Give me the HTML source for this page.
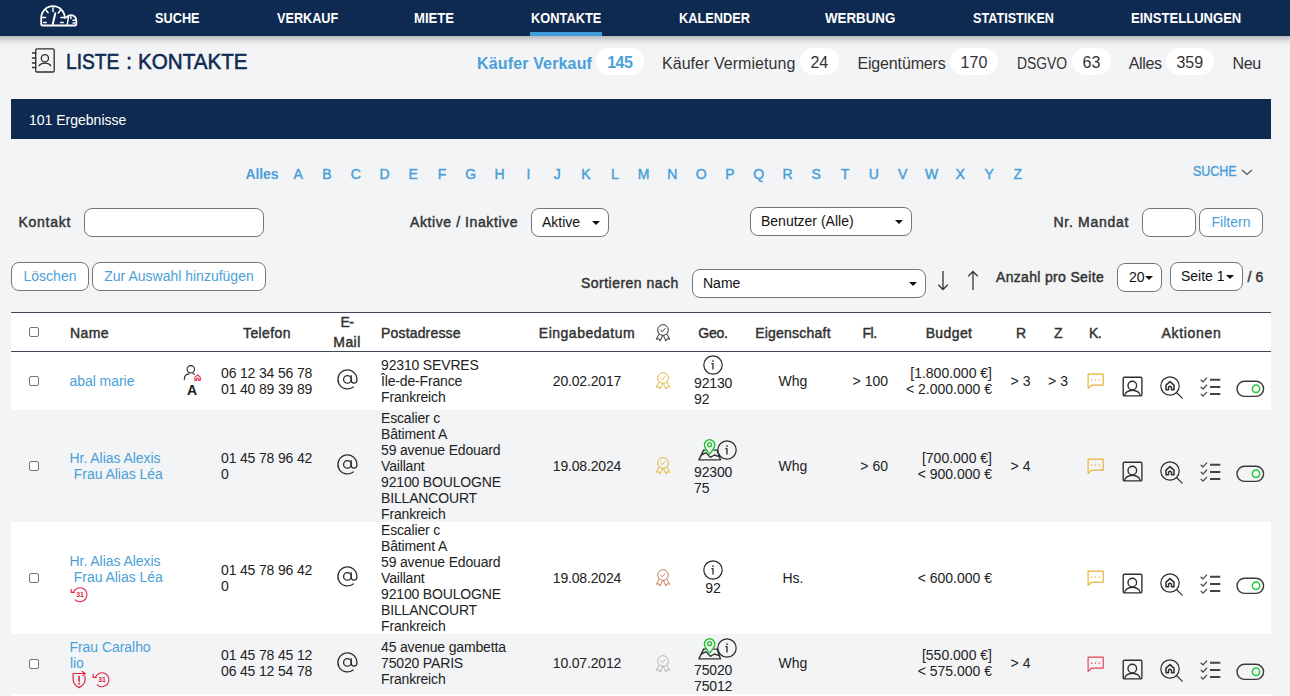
<!DOCTYPE html>
<html lang="de">
<head>
<meta charset="utf-8">
<title>Liste : Kontakte</title>
<style>
*{box-sizing:border-box}
html,body{margin:0;padding:0}
body{width:1290px;height:696px;overflow:hidden;background:#f3f4f6;font-family:"Liberation Sans",sans-serif;font-size:14px;color:#222;position:relative}
a{text-decoration:none;color:inherit}
.abs{position:absolute;white-space:nowrap}
.sx{display:inline-block;transform-origin:0 50%}

/* nav */
#nav{position:absolute;left:0;top:0;width:1290px;height:36px;background:#0f2a50;z-index:5}
#navsh{position:absolute;left:-30px;top:0;width:1350px;height:36px;box-shadow:0 1px 9px rgba(0,0,0,.42);z-index:4}
#nav a.it{position:absolute;top:8px;height:20px;line-height:20px;font-size:14px;font-weight:700;color:#fff;white-space:nowrap;transform-origin:0 50%}
#nav .ul{position:absolute;left:530px;top:32px;width:72px;height:4px;background:#3f9bd9}

/* title */
#title{position:absolute;left:65.5px;top:48px;height:28px;line-height:28px;font-size:22px;font-weight:400;-webkit-text-stroke:.55px #0f2a50;color:#0f2a50;white-space:nowrap;margin:0;transform-origin:0 50%}
.tab{position:absolute;top:53.5px;height:20px;line-height:20px;font-size:16px;color:#333;white-space:nowrap}
.tab.on{color:#4a9fd8;font-weight:700}
.pill{position:absolute;top:48px;height:27px;line-height:30px;border-radius:14px;background:#fff;font-size:16px;color:#333;text-align:center}
.pill.on{color:#4a9fd8;font-weight:700}

#bar{position:absolute;left:11px;top:99px;width:1260px;height:40px;background:#0f2a50;color:#fff}
#bar span{position:absolute;left:18px;letter-spacing:.03px;top:11px;line-height:20px;font-size:14px;letter-spacing:0}

#alpha a{position:absolute;top:164px;height:20px;line-height:20px;width:28.8px;text-align:center;font-size:14px;font-weight:400;-webkit-text-stroke:.45px #4a9fd8;color:#4a9fd8}
.lbl{position:absolute;height:20px;line-height:20px;font-size:14px;font-weight:400;color:#333;-webkit-text-stroke:.45px #333;white-space:nowrap}
.ctl{position:absolute;background:#fff;border:1px solid #767676;border-radius:8px;height:29px;font-family:"Liberation Sans",sans-serif;font-size:14px;color:#111;margin:0;padding:0;outline:0}
select.ctl{appearance:none;-webkit-appearance:none;padding-left:10px;padding-bottom:2px}
button.ctl{color:#4a9fd8;text-align:center;padding-bottom:2px}
.arr{position:absolute;width:0;height:0;border-left:4.5px solid transparent;border-right:4.5px solid transparent;border-top:4.5px solid #111}

/* table */
#tbl{position:absolute;left:11px;top:312px;width:1260px;border-collapse:separate;border-spacing:0;table-layout:fixed;font-size:14px;line-height:16px;color:#222}
#tbl th,#tbl td{padding:0;vertical-align:middle;overflow:visible;position:relative}
#tbl thead tr{height:40px;background:#fff}
#tbl thead th{border-top:1px solid #3c4858;border-bottom:1px solid #3c4858;font-weight:400;-webkit-text-stroke:.45px #333;color:#333;font-size:14px;line-height:20px;height:40px;padding-top:2px}
#tbl tbody tr.w{background:#fff}
.ls{letter-spacing:-.16px}
#tbl tr.r4 td{padding-bottom:2px}#tbl tr.r4 td.t0{padding-bottom:0}
.l{text-align:left}.c{text-align:center}.r{text-align:right}
#tbl a.n{color:#4a9fd8;letter-spacing:-.05px;margin-left:-.5px}
input.cb{appearance:none;-webkit-appearance:none;width:10px;height:10px;border:1px solid #767676;border-radius:2px;background:#fff;margin:0;display:block;position:absolute;left:18px}
svg{display:block;overflow:visible}
.ic{position:absolute}
</style>
</head>
<body>

<div id="navsh"></div>
<div id="nav">
  <svg class="ic" style="left:38px;top:3px" width="42" height="26" viewBox="38 3 42 26" fill="none" stroke="#fff" stroke-width="1.8" stroke-linecap="round" stroke-linejoin="round">
    <path d="M43 25.5c-1.2 0-1.8-.7-1.8-1.8v-5.8a11.8 11.8 0 0 1 23.6 0M43 25.5h32c.8 0 1.3-.5 1.3-1.3v-3.6a5.5 5.5 0 0 0-9.9-3.2"/>
    <path d="M42.2 17.4h3.3M46.1 10.3l2 2.5M53 7.8v3.6M60.4 10.3l-2.1 2.7M61 17.4h3M43.6 22.5h2.6M60.6 22.5h2.6" stroke-width="1.5"/>
    <path d="M52.8 24l2.5-10.8" stroke-width="2"/>
    <path d="M67.3 24.2l1.2-7.5M70.9 16.7v1.8M73 20.2h2M73 22.9h2" stroke-width="1.5"/>
  </svg>
  <a class="it" style="left:155px;transform:scaleX(.91)">SUCHE</a>
  <a class="it" style="left:276.5px;transform:scaleX(.905)">VERKAUF</a>
  <a class="it" style="left:414px;transform:scaleX(.935)">MIETE</a>
  <a class="it" style="left:531px;transform:scaleX(.916)">KONTAKTE</a>
  <a class="it" style="left:678.5px;transform:scaleX(.912)">KALENDER</a>
  <a class="it" style="left:825px;transform:scaleX(.952)">WERBUNG</a>
  <a class="it" style="left:972.5px;transform:scaleX(.903)">STATISTIKEN</a>
  <a class="it" style="left:1131px;transform:scaleX(.933)">EINSTELLUNGEN</a>
  <div class="ul"></div>
</div>

<svg class="ic" style="left:31px;top:47px" width="25" height="27" viewBox="31 47 25 27" fill="none" stroke="#2d2d2d" stroke-width="1.3" stroke-linecap="round" stroke-linejoin="round">
  <rect x="35.7" y="48.8" width="18.5" height="23.2" rx="1.3"/>
  <path d="M32.5 53.1h3.2M32.5 57.9h3.2M32.5 63h3.2M32.5 67.6h3.2" stroke-width="1.5"/>
  <circle cx="44.9" cy="58.3" r="3.6"/><path d="M39.2 65.7a6.3 4.2 0 0 1 11.5 0"/>
</svg>
<h1 id="title"><span class="sx" style="transform:scaleX(.873)">LISTE</span><span class="abs" style="left:60.5px">:</span><span class="sx abs" style="left:72.3px;transform:scaleX(.937)">KONTAKTE</span></h1>

<a class="tab on" style="left:477px;letter-spacing:.15px">Käufer Verkauf</a><span class="pill on" style="left:596px;width:47.5px;letter-spacing:-.6px">145</span>
<a class="tab" style="left:662px;letter-spacing:.05px">Käufer Vermietung</a><span class="pill" style="left:800px;width:38.7px">24</span>
<a class="tab" style="left:857.4px;letter-spacing:-.14px">Eigentümers</a><span class="pill" style="left:950.2px;width:47.5px">170</span>
<a class="tab" style="left:1016.8px"><span class="sx" style="transform:scaleX(.868)">DSGVO</span></a><span class="pill" style="left:1072.3px;width:38.4px">63</span>
<a class="tab" style="left:1128.8px;letter-spacing:-.38px">Alles</a><span class="pill" style="left:1166px;width:47.5px">359</span>
<a class="tab" style="left:1232.4px;letter-spacing:-.25px">Neu</a>

<div id="bar"><span>101 Ergebnisse</span></div>

<div id="alpha">
  <a style="left:245.5px;width:auto;font-weight:700;-webkit-text-stroke:0;letter-spacing:-.1px">Alles</a>
  <a style="left:283.7px">A</a>
  <a style="left:312.5px">B</a>
  <a style="left:341.3px">C</a>
  <a style="left:370.1px">D</a>
  <a style="left:398.9px">E</a>
  <a style="left:427.7px">F</a>
  <a style="left:456.4px">G</a>
  <a style="left:485.2px">H</a>
  <a style="left:514.0px">I</a>
  <a style="left:542.8px">J</a>
  <a style="left:571.6px">K</a>
  <a style="left:600.4px">L</a>
  <a style="left:629.2px">M</a>
  <a style="left:658.0px">N</a>
  <a style="left:686.8px">O</a>
  <a style="left:715.6px">P</a>
  <a style="left:744.3px">Q</a>
  <a style="left:773.1px">R</a>
  <a style="left:801.9px">S</a>
  <a style="left:830.7px">T</a>
  <a style="left:859.5px">U</a>
  <a style="left:888.3px">V</a>
  <a style="left:917.1px">W</a>
  <a style="left:945.9px">X</a>
  <a style="left:974.7px">Y</a>
  <a style="left:1003.5px">Z</a>
</div>
<a class="abs" id="suche2" style="left:1192.5px;top:161px;line-height:20px;font-size:14px;font-weight:400;-webkit-text-stroke:.4px #4a9fd8;color:#4a9fd8"><span class="sx" style="transform:scaleX(.89)">SUCHE</span></a>
<svg class="ic" style="left:1241px;top:169px" width="12" height="7" viewBox="0 0 12 7"><path d="M1 1l5 4.5L11 1" fill="none" stroke="#555" stroke-width="1.2"/></svg>

<form id="filters">
<label class="lbl" style="left:18.5px;top:212px;letter-spacing:0.73px">Kontakt</label>
<input class="ctl" type="text" style="left:84px;top:208px;width:180px">
<label class="lbl" style="left:410px;top:212px;letter-spacing:0.59px">Aktive / Inaktive</label>
<select class="ctl" style="left:531px;top:208px;width:78px"><option>Aktive</option></select><i class="arr" style="left:591.7px;top:220.5px"></i>
<select class="ctl" style="left:750px;top:207px;width:162px"><option>Benutzer (Alle)</option></select><i class="arr" style="left:894.5px;top:219.5px"></i>
<label class="lbl" style="left:1053.5px;top:212px;letter-spacing:0.7px">Nr. Mandat</label>
<input class="ctl" type="text" style="left:1142px;top:208px;width:54px">
<button class="ctl" type="button" style="left:1199px;top:208px;width:64px">Filtern</button>

<button class="ctl" type="button" style="left:11px;top:262px;width:78px">Löschen</button>
<button class="ctl" type="button" style="left:92px;top:262px;width:174px">Zur Auswahl hinzufügen</button>
<label class="lbl" style="left:581px;top:273px;letter-spacing:0.47px">Sortieren nach</label>
<select class="ctl" style="left:692px;top:269px;width:234px"><option>Name</option></select><i class="arr" style="left:908.5px;top:281.5px"></i>
<svg class="ic" style="left:937px;top:270px" width="12" height="21" viewBox="0 0 12 21"><path d="M6 1v18.5M1.3 14.8L6 19.5l4.7-4.7" fill="none" stroke="#333" stroke-width="1.3"/></svg>
<svg class="ic" style="left:967px;top:270px" width="12" height="21" viewBox="0 0 12 21"><path d="M6 20V1.5M1.3 6.2L6 1.5l4.7 4.7" fill="none" stroke="#333" stroke-width="1.3"/></svg>
<label class="lbl" style="left:996px;top:267px;letter-spacing:0.33px">Anzahl pro Seite</label>
<select class="ctl" style="left:1117px;top:263px;width:45px;padding-left:11px"><option>20</option></select><i class="arr" style="left:1145.3px;top:275.5px"></i>
<select class="ctl" style="left:1170px;top:262px;width:73px"><option>Seite 1</option></select><i class="arr" style="left:1225.5px;top:274.5px"></i>
<span class="lbl" style="left:1247.5px;top:267px;letter-spacing:0.1px">/ 6</span>
</form>

<table id="tbl">
<colgroup><col style="width:47px"><col style="width:120px"><col style="width:28px"><col style="width:122px"><col style="width:38px"><col style="width:166px"><col style="width:110px"><col style="width:42px"><col style="width:58px"><col style="width:102px"><col style="width:51px"><col style="width:108px"><col style="width:35px"><col style="width:40px"><col style="width:34px"><col style="width:159px"></colgroup>
<thead><tr>
<th><input class="cb" type="checkbox" style="top:14px"></th>
<th class="l" style="padding-left:12px;letter-spacing:0.41px">Name</th>
<th></th>
<th class="c" style="letter-spacing:0.41px">Telefon</th>
<th class="c"><div style="position:absolute;left:0;top:-1px;width:38px;line-height:20px"><span style="letter-spacing:-.6px">E-</span><br><span style="letter-spacing:.43px">Mail</span></div></th>
<th class="l" style="padding-left:15px;letter-spacing:0.17px">Postadresse</th>
<th class="c" style="letter-spacing:0.5px">Eingabedatum</th>
<th class="c"><svg class="ic" style="left:12.9px;top:11.1px" width="16" height="18" viewBox="0 0 16 18" fill="none" stroke="#333" stroke-width="1" stroke-linejoin="round" stroke-linecap="round"><circle cx="8" cy="6" r="5.3" stroke-dasharray="1.9 .5"/><path d="M5.6 6.2l1.6 1.5 3-3.2"/><path d="M4 10.2L1.3 15.3l2.6-.6 1.2 2.4 2.4-5.4M12 10.2l2.7 5.1-2.6-.6-1.2 2.4-2.4-5.4"/></svg></th>
<th class="c" style="letter-spacing:-0.24px">Geo.</th>
<th class="c" style="letter-spacing:0.23px">Eigenschaft</th>
<th class="c" style="letter-spacing:-0.5px">Fl.</th>
<th class="c" style="letter-spacing:0.39px">Budget</th>
<th class="c" style="letter-spacing:-1px">R</th>
<th class="c" style="letter-spacing:-0.5px">Z</th>
<th class="c" style="letter-spacing:-0.6px">K.</th>
<th class="c" style="letter-spacing:0.69px">Aktionen</th>
</tr></thead>
<tbody>
<tr class="w" style="height:58px">
<td><input class="cb" type="checkbox" style="top:24px"></td>
<td class="l" style="padding-left:12px"><a class="n">abal marie</a></td>
<td class="c"><svg class="ic" style="left:5px;top:12px" width="20" height="18" viewBox="0 0 20 18" fill="none" stroke-linecap="round" stroke-linejoin="round"><circle cx="7.8" cy="5.3" r="3.7" stroke="#2a2a2a" stroke-width="1.1"/><path d="M1.3 15.6c0-3.3 2-5.6 4.7-5.7M10 9.8l1.6.5" stroke="#2a2a2a" stroke-width="1.1"/><path d="M11.9 13.4l2.7-2.5 2.7 2.5v2.9h-1.7v-1.3a1 1 0 0 0-2 0v1.3h-1.7z" stroke="#e8334f" stroke-width="1.2"/></svg><b class="abs" style="left:8.9px;top:29.5px;font-size:14px;line-height:16px;color:#1a1a1a">A</b></td>
<td class="l ls" style="padding-left:15px">06 12 34 56 78<br>01 40 89 39 89</td>
<td class="c"><svg class="ic" style="left:7.6px;top:calc(50% - 12.9px)" width="22.8" height="22.8" viewBox="0 0 24 24" fill="none" stroke="#2a2a2a" stroke-width="1.35" stroke-linecap="round" stroke-linejoin="round"><circle cx="12" cy="12" r="4"/><path d="M16 8v5a3 3 0 0 0 6 0v-1a10 10 0 1 0-3.92 7.94"/></svg></td>
<td class="l ls" style="padding-left:15px">92310 SEVRES<br>Île-de-France<br>Frankreich</td>
<td class="c ls">20.02.2017</td>
<td class="c"><svg class="ic" style="left:12.9px;top:calc(50% - 8.9px)" width="16" height="18" viewBox="0 0 16 18" fill="none" stroke="#e3b93d" stroke-width="1" stroke-linejoin="round" stroke-linecap="round"><circle cx="8" cy="6" r="5.3" stroke-dasharray="1.9 .5"/><path d="M5.6 6.2l1.6 1.5 3-3.2"/><path d="M4 10.2L1.3 15.3l2.6-.6 1.2 2.4 2.4-5.4M12 10.2l2.7 5.1-2.6-.6-1.2 2.4-2.4-5.4"/></svg></td>
<td class="l ls" style="padding-left:10px;vertical-align:top"><div style="height:23px"></div>92130<br>92<svg class="ic" style="left:19.2px;top:2.9px" width="20" height="20" viewBox="0 0 20 20" fill="none" stroke="#2a2a2a" stroke-width="1.2" stroke-linecap="round"><circle cx="10" cy="10" r="9.2"/><path d="M10 8.7v5.4M8.9 8.7H10" stroke-width="1.3"/><circle cx="10" cy="6.1" r=".9" fill="#2a2a2a" stroke="none"/></svg></td>
<td class="c">Whg</td>
<td class="r" style="padding-right:7px">&gt; 100</td>
<td class="r" style="padding-right:11px">[1.800.000 €]<br>&lt; 2.000.000 €</td>
<td class="c">&gt; 3</td>
<td class="c">&gt; 3</td>
<td class="c"><svg class="ic" style="left:8.5px;top:calc(50% - 8.3px)" width="18" height="17" viewBox="0 0 18 17" fill="none" stroke="#e8b23a" stroke-width="1.2" stroke-linejoin="round"><path d="M1.1 1.2h15.1v11H4.6L1.1 15.2z"/><path d="M4 7.1h1.3M7.8 7.1h1.3M11.6 7.1h1.3" stroke-width="1.3"/></svg></td>
<td><svg class="ic" style="left:9.5px;top:calc(50% - 4.65px)" width="21" height="21" viewBox="0 0 21 21" fill="none" stroke="#2d2d2d" stroke-width="1.35"><rect x="1.2" y="1.2" width="18.7" height="18.7" rx="1.2"/><circle cx="10.3" cy="9.5" r="4.3"/><path d="M2.6 19.8a7.8 5.6 0 0 1 15.6 0"/></svg><svg class="ic" style="left:46.65px;top:calc(50% - 6.5px)" width="24" height="24" viewBox="0 0 24 24" fill="none" stroke="#2d2d2d" stroke-width="1.2" stroke-linecap="round" stroke-linejoin="round"><circle cx="11" cy="11" r="9.2"/><path d="M17.7 17.7l5.5 5.4"/><path d="M7 10.1L11 6.6l4 3.5v4.7h-2.5v-2a1.5 1.5 0 0 0-3 0v2H7z" stroke-width="1.5"/></svg><svg class="ic" style="left:87.5px;top:calc(50% - 4px)" width="21" height="19" viewBox="0 0 21 19" fill="none" stroke="#444" stroke-linecap="butt"><path d="M.7 2.8l2.3 2.2 4-4.3M.7 9.85l2.3 2.2 4-4.3M.7 16.9l2.3 2.2 4-4.3" stroke-width="1.2"/><path d="M10 2.8h10.3M10 9.9h10.3M10 16.9h10.3" stroke-width="2"/></svg><svg class="ic" style="left:123.5px;top:calc(50% - 1.3px)" width="29" height="18" viewBox="0 0 29 18" fill="none"><rect x="1" y="1.2" width="26.6" height="15.2" rx="7.6" stroke="#3a3a3a" stroke-width="1.4"/><circle cx="20" cy="8.8" r="3.7" stroke="#22c93a" stroke-width="1.5"/></svg></td>
</tr>
<tr style="height:112px">
<td><input class="cb" type="checkbox" style="top:51px"></td>
<td class="l" style="padding-left:12px"><a class="n">Hr. Alias Alexis<br>&nbsp;Frau Alias Léa</a></td>
<td></td>
<td class="l ls" style="padding-left:15px">01 45 78 96 42<br>0</td>
<td class="c"><svg class="ic" style="left:7.6px;top:calc(50% - 12.9px)" width="22.8" height="22.8" viewBox="0 0 24 24" fill="none" stroke="#2a2a2a" stroke-width="1.35" stroke-linecap="round" stroke-linejoin="round"><circle cx="12" cy="12" r="4"/><path d="M16 8v5a3 3 0 0 0 6 0v-1a10 10 0 1 0-3.92 7.94"/></svg></td>
<td class="l ls" style="padding-left:15px">Escalier c<br>Bâtiment A<br>59 avenue Edouard<br>Vaillant<br>92100 BOULOGNE<br>BILLANCOURT<br>Frankreich</td>
<td class="c ls">19.08.2024</td>
<td class="c"><svg class="ic" style="left:12.9px;top:calc(50% - 8.9px)" width="16" height="18" viewBox="0 0 16 18" fill="none" stroke="#e3b93d" stroke-width="1" stroke-linejoin="round" stroke-linecap="round"><circle cx="8" cy="6" r="5.3" stroke-dasharray="1.9 .5"/><path d="M5.6 6.2l1.6 1.5 3-3.2"/><path d="M4 10.2L1.3 15.3l2.6-.6 1.2 2.4 2.4-5.4M12 10.2l2.7 5.1-2.6-.6-1.2 2.4-2.4-5.4"/></svg></td>
<td class="l ls" style="padding-left:10px;vertical-align:top"><div style="height:54px"></div>92300<br>75<svg class="ic" style="left:14px;top:28px" width="24" height="24" viewBox="0 0 24 24" fill="none" stroke-linejoin="round" stroke-linecap="round"><path d="M5.6 12.1L.9 21.9h21.6l-3.4-9.8h-3.2M5.6 12.1h2.2M3.3 17.2l4.6-2.6 4.4 4.8 4.2-2.4 4.6 1.6" stroke="#333" stroke-width="1.4"/><path d="M11.6 16.1c-2.9-3.6-5.2-6.5-5.2-9.2a5.2 5.2 0 0 1 10.4 0c0 2.7-2.3 5.6-5.2 9.2z" stroke="#1fc12e" stroke-width="1.4" fill="#f3f4f6"/><circle cx="11.6" cy="6.7" r="2" stroke="#1fc12e" stroke-width="1.3"/></svg><svg class="ic" style="left:32.5px;top:29.6px" width="20" height="20" viewBox="0 0 20 20" fill="none" stroke="#2a2a2a" stroke-width="1.2" stroke-linecap="round"><circle cx="10" cy="10" r="9.2"/><path d="M10 8.7v5.4M8.9 8.7H10" stroke-width="1.3"/><circle cx="10" cy="6.1" r=".9" fill="#2a2a2a" stroke="none"/></svg></td>
<td class="c">Whg</td>
<td class="r" style="padding-right:7px">&gt; 60</td>
<td class="r" style="padding-right:11px">[700.000 €]<br>&lt; 900.000 €</td>
<td class="c">&gt; 4</td>
<td class="c"></td>
<td class="c"><svg class="ic" style="left:8.5px;top:calc(50% - 8.3px)" width="18" height="17" viewBox="0 0 18 17" fill="none" stroke="#e8b23a" stroke-width="1.2" stroke-linejoin="round"><path d="M1.1 1.2h15.1v11H4.6L1.1 15.2z"/><path d="M4 7.1h1.3M7.8 7.1h1.3M11.6 7.1h1.3" stroke-width="1.3"/></svg></td>
<td><svg class="ic" style="left:9.5px;top:calc(50% - 4.65px)" width="21" height="21" viewBox="0 0 21 21" fill="none" stroke="#2d2d2d" stroke-width="1.35"><rect x="1.2" y="1.2" width="18.7" height="18.7" rx="1.2"/><circle cx="10.3" cy="9.5" r="4.3"/><path d="M2.6 19.8a7.8 5.6 0 0 1 15.6 0"/></svg><svg class="ic" style="left:46.65px;top:calc(50% - 6.5px)" width="24" height="24" viewBox="0 0 24 24" fill="none" stroke="#2d2d2d" stroke-width="1.2" stroke-linecap="round" stroke-linejoin="round"><circle cx="11" cy="11" r="9.2"/><path d="M17.7 17.7l5.5 5.4"/><path d="M7 10.1L11 6.6l4 3.5v4.7h-2.5v-2a1.5 1.5 0 0 0-3 0v2H7z" stroke-width="1.5"/></svg><svg class="ic" style="left:87.5px;top:calc(50% - 4px)" width="21" height="19" viewBox="0 0 21 19" fill="none" stroke="#444" stroke-linecap="butt"><path d="M.7 2.8l2.3 2.2 4-4.3M.7 9.85l2.3 2.2 4-4.3M.7 16.9l2.3 2.2 4-4.3" stroke-width="1.2"/><path d="M10 2.8h10.3M10 9.9h10.3M10 16.9h10.3" stroke-width="2"/></svg><svg class="ic" style="left:123.5px;top:calc(50% - 1.3px)" width="29" height="18" viewBox="0 0 29 18" fill="none"><rect x="1" y="1.2" width="26.6" height="15.2" rx="7.6" stroke="#3a3a3a" stroke-width="1.4"/><circle cx="20" cy="8.8" r="3.7" stroke="#22c93a" stroke-width="1.5"/></svg></td>
</tr>
<tr class="w" style="height:112px">
<td><input class="cb" type="checkbox" style="top:51px"></td>
<td class="l" style="padding-left:12px;vertical-align:top"><div style="height:31px"></div><a class="n">Hr. Alias Alexis<br>&nbsp;Frau Alias Léa</a><svg class="ic" style="left:11.8px;top:65.4px" width="18" height="16" viewBox="0 0 18 16" fill="none" stroke="#e0213f" stroke-width="1.1" stroke-linecap="round" stroke-linejoin="round"><path d="M3.4 5.4A7 7 0 1 1 5.1 12.8"/><path d="M1.2 2.4v3h3"/><text x="10.1" y="10.3" font-family="Liberation Sans,sans-serif" font-size="7" font-weight="700" fill="#e0213f" stroke="none" text-anchor="middle">31</text></svg></td>
<td></td>
<td class="l ls" style="padding-left:15px">01 45 78 96 42<br>0</td>
<td class="c"><svg class="ic" style="left:7.6px;top:calc(50% - 12.9px)" width="22.8" height="22.8" viewBox="0 0 24 24" fill="none" stroke="#2a2a2a" stroke-width="1.35" stroke-linecap="round" stroke-linejoin="round"><circle cx="12" cy="12" r="4"/><path d="M16 8v5a3 3 0 0 0 6 0v-1a10 10 0 1 0-3.92 7.94"/></svg></td>
<td class="l ls" style="padding-left:15px">Escalier c<br>Bâtiment A<br>59 avenue Edouard<br>Vaillant<br>92100 BOULOGNE<br>BILLANCOURT<br>Frankreich</td>
<td class="c ls">19.08.2024</td>
<td class="c"><svg class="ic" style="left:12.9px;top:calc(50% - 8.9px)" width="16" height="18" viewBox="0 0 16 18" fill="none" stroke="#c8805a" stroke-width="1" stroke-linejoin="round" stroke-linecap="round"><circle cx="8" cy="6" r="5.3" stroke-dasharray="1.9 .5"/><path d="M5.6 6.2l1.6 1.5 3-3.2"/><path d="M4 10.2L1.3 15.3l2.6-.6 1.2 2.4 2.4-5.4M12 10.2l2.7 5.1-2.6-.6-1.2 2.4-2.4-5.4"/></svg></td>
<td class="c" style="vertical-align:top"><div style="height:58px"></div>92<svg class="ic" style="left:18.7px;top:37.65px" width="20" height="20" viewBox="0 0 20 20" fill="none" stroke="#2a2a2a" stroke-width="1.2" stroke-linecap="round"><circle cx="10" cy="10" r="9.2"/><path d="M10 8.7v5.4M8.9 8.7H10" stroke-width="1.3"/><circle cx="10" cy="6.1" r=".9" fill="#2a2a2a" stroke="none"/></svg></td>
<td class="c">Hs.</td>
<td class="r" style="padding-right:7px"></td>
<td class="r" style="padding-right:11px">&lt; 600.000 €</td>
<td class="c"></td>
<td class="c"></td>
<td class="c"><svg class="ic" style="left:8.5px;top:calc(50% - 8.3px)" width="18" height="17" viewBox="0 0 18 17" fill="none" stroke="#e8b23a" stroke-width="1.2" stroke-linejoin="round"><path d="M1.1 1.2h15.1v11H4.6L1.1 15.2z"/><path d="M4 7.1h1.3M7.8 7.1h1.3M11.6 7.1h1.3" stroke-width="1.3"/></svg></td>
<td><svg class="ic" style="left:9.5px;top:calc(50% - 4.65px)" width="21" height="21" viewBox="0 0 21 21" fill="none" stroke="#2d2d2d" stroke-width="1.35"><rect x="1.2" y="1.2" width="18.7" height="18.7" rx="1.2"/><circle cx="10.3" cy="9.5" r="4.3"/><path d="M2.6 19.8a7.8 5.6 0 0 1 15.6 0"/></svg><svg class="ic" style="left:46.65px;top:calc(50% - 6.5px)" width="24" height="24" viewBox="0 0 24 24" fill="none" stroke="#2d2d2d" stroke-width="1.2" stroke-linecap="round" stroke-linejoin="round"><circle cx="11" cy="11" r="9.2"/><path d="M17.7 17.7l5.5 5.4"/><path d="M7 10.1L11 6.6l4 3.5v4.7h-2.5v-2a1.5 1.5 0 0 0-3 0v2H7z" stroke-width="1.5"/></svg><svg class="ic" style="left:87.5px;top:calc(50% - 4px)" width="21" height="19" viewBox="0 0 21 19" fill="none" stroke="#444" stroke-linecap="butt"><path d="M.7 2.8l2.3 2.2 4-4.3M.7 9.85l2.3 2.2 4-4.3M.7 16.9l2.3 2.2 4-4.3" stroke-width="1.2"/><path d="M10 2.8h10.3M10 9.9h10.3M10 16.9h10.3" stroke-width="2"/></svg><svg class="ic" style="left:123.5px;top:calc(50% - 1.3px)" width="29" height="18" viewBox="0 0 29 18" fill="none"><rect x="1" y="1.2" width="26.6" height="15.2" rx="7.6" stroke="#3a3a3a" stroke-width="1.4"/><circle cx="20" cy="8.8" r="3.7" stroke="#22c93a" stroke-width="1.5"/></svg></td>
</tr>
<tr class="r4" style="height:60px">
<td><input class="cb" type="checkbox" style="top:25px"></td>
<td class="l" style="padding-left:12px;vertical-align:top"><div style="height:5px"></div><a class="n">Frau Caralho<br>lio</a><svg class="ic" style="left:13.5px;top:37.3px" width="16" height="18" viewBox="0 0 16 18" fill="none" stroke="#e0213f" stroke-width="1.2" stroke-linecap="round" stroke-linejoin="round"><path d="M10.6 2.5H1.1v5.5c0 4.2 2.6 7 6 8.6 3.4-1.6 6-4.4 6-8.6V5.5"/><path d="M10.3.6l2.9 1.9-2.2 2.4M9.8 2.5h3.4"/><path d="M7.1 5.5v5" stroke-width="1.5"/><circle cx="7.1" cy="12.7" r=".9" fill="#e0213f" stroke="none"/></svg><svg class="ic" style="left:34.3px;top:38.2px" width="18" height="16" viewBox="0 0 18 16" fill="none" stroke="#e0213f" stroke-width="1.1" stroke-linecap="round" stroke-linejoin="round"><path d="M3.4 5.4A7 7 0 1 1 5.1 12.8"/><path d="M1.2 2.4v3h3"/><text x="10.1" y="10.3" font-family="Liberation Sans,sans-serif" font-size="7" font-weight="700" fill="#e0213f" stroke="none" text-anchor="middle">31</text></svg></td>
<td></td>
<td class="l ls" style="padding-left:15px">01 45 78 45 12<br>06 45 12 54 78</td>
<td class="c"><svg class="ic" style="left:7.6px;top:calc(50% - 12.9px)" width="22.8" height="22.8" viewBox="0 0 24 24" fill="none" stroke="#2a2a2a" stroke-width="1.35" stroke-linecap="round" stroke-linejoin="round"><circle cx="12" cy="12" r="4"/><path d="M16 8v5a3 3 0 0 0 6 0v-1a10 10 0 1 0-3.92 7.94"/></svg></td>
<td class="l ls" style="padding-left:15px">45 avenue gambetta<br>75020 PARIS<br>Frankreich</td>
<td class="c ls">10.07.2012</td>
<td class="c"><svg class="ic" style="left:12.9px;top:calc(50% - 8.9px)" width="16" height="18" viewBox="0 0 16 18" fill="none" stroke="#b5b5b5" stroke-width="1" stroke-linejoin="round" stroke-linecap="round"><circle cx="8" cy="6" r="5.3" stroke-dasharray="1.9 .5"/><path d="M5.6 6.2l1.6 1.5 3-3.2"/><path d="M4 10.2L1.3 15.3l2.6-.6 1.2 2.4 2.4-5.4M12 10.2l2.7 5.1-2.6-.6-1.2 2.4-2.4-5.4"/></svg></td>
<td class="l ls t0" style="padding-left:10px;vertical-align:top"><div style="height:28px"></div>75020<br>75012<svg class="ic" style="left:14px;top:2.7px" width="24" height="24" viewBox="0 0 24 24" fill="none" stroke-linejoin="round" stroke-linecap="round"><path d="M5.6 12.1L.9 21.9h21.6l-3.4-9.8h-3.2M5.6 12.1h2.2M3.3 17.2l4.6-2.6 4.4 4.8 4.2-2.4 4.6 1.6" stroke="#333" stroke-width="1.4"/><path d="M11.6 16.1c-2.9-3.6-5.2-6.5-5.2-9.2a5.2 5.2 0 0 1 10.4 0c0 2.7-2.3 5.6-5.2 9.2z" stroke="#1fc12e" stroke-width="1.4" fill="#f3f4f6"/><circle cx="11.6" cy="6.7" r="2" stroke="#1fc12e" stroke-width="1.3"/></svg><svg class="ic" style="left:32.5px;top:3.8px" width="20" height="20" viewBox="0 0 20 20" fill="none" stroke="#2a2a2a" stroke-width="1.2" stroke-linecap="round"><circle cx="10" cy="10" r="9.2"/><path d="M10 8.7v5.4M8.9 8.7H10" stroke-width="1.3"/><circle cx="10" cy="6.1" r=".9" fill="#2a2a2a" stroke="none"/></svg></td>
<td class="c">Whg</td>
<td class="r" style="padding-right:7px"></td>
<td class="r" style="padding-right:11px">[550.000 €]<br>&lt; 575.000 €</td>
<td class="c">&gt; 4</td>
<td class="c"></td>
<td class="c"><svg class="ic" style="left:8.5px;top:calc(50% - 8.3px)" width="18" height="17" viewBox="0 0 18 17" fill="none" stroke="#e8445a" stroke-width="1.2" stroke-linejoin="round"><path d="M1.1 1.2h15.1v11H4.6L1.1 15.2z"/><path d="M4 7.1h1.3M7.8 7.1h1.3M11.6 7.1h1.3" stroke-width="1.3"/></svg></td>
<td><svg class="ic" style="left:9.5px;top:calc(50% - 4.65px)" width="21" height="21" viewBox="0 0 21 21" fill="none" stroke="#2d2d2d" stroke-width="1.35"><rect x="1.2" y="1.2" width="18.7" height="18.7" rx="1.2"/><circle cx="10.3" cy="9.5" r="4.3"/><path d="M2.6 19.8a7.8 5.6 0 0 1 15.6 0"/></svg><svg class="ic" style="left:46.65px;top:calc(50% - 6.5px)" width="24" height="24" viewBox="0 0 24 24" fill="none" stroke="#2d2d2d" stroke-width="1.2" stroke-linecap="round" stroke-linejoin="round"><circle cx="11" cy="11" r="9.2"/><path d="M17.7 17.7l5.5 5.4"/><path d="M7 10.1L11 6.6l4 3.5v4.7h-2.5v-2a1.5 1.5 0 0 0-3 0v2H7z" stroke-width="1.5"/></svg><svg class="ic" style="left:87.5px;top:calc(50% - 4px)" width="21" height="19" viewBox="0 0 21 19" fill="none" stroke="#444" stroke-linecap="butt"><path d="M.7 2.8l2.3 2.2 4-4.3M.7 9.85l2.3 2.2 4-4.3M.7 16.9l2.3 2.2 4-4.3" stroke-width="1.2"/><path d="M10 2.8h10.3M10 9.9h10.3M10 16.9h10.3" stroke-width="2"/></svg><svg class="ic" style="left:123.5px;top:calc(50% - 1.3px)" width="29" height="18" viewBox="0 0 29 18" fill="none"><rect x="1" y="1.2" width="26.6" height="15.2" rx="7.6" stroke="#3a3a3a" stroke-width="1.4"/><circle cx="20" cy="8.8" r="3.7" stroke="#22c93a" stroke-width="1.5"/></svg></td>
</tr>
<tr class="w" style="height:20px"><td colspan="16"></td></tr>
</tbody>
</table>

</body>
</html>
